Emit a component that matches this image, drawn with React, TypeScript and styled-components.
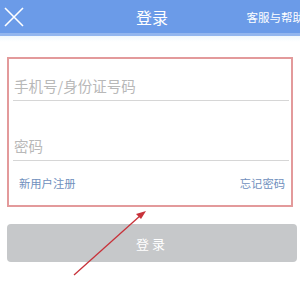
import styled, { createGlobalStyle } from 'styled-components';

const GlobalStyle = createGlobalStyle`
  html, body {
    margin: 0;
    padding: 0;
    background: #ffffff;
    font-family: "Noto Sans CJK SC", "Noto Sans", sans-serif;
  }
`;

const Page = styled.div`
  position: relative;
  width: 300px;
  height: 283px;
  overflow: hidden;
  background: #ffffff;
`;

const Header = styled.header`
  height: 33px;
  background: #6b9be8;
  border-bottom: 3px solid #93b6ee;
  display: grid;
  grid-template-columns: 1fr auto 1fr;
  align-items: center;
`;

const CloseButton = styled.div`
  width: 28px;
  height: 33px;
  display: flex;
  align-items: center;
  justify-content: center;
`;

const Title = styled.h1`
  margin: 0;
  color: #ffffff;
  font-size: 16px;
  font-weight: 400;
  padding-left: 4px;
`;

const HeaderLink = styled.span`
  justify-self: end;
  color: #ffffff;
  font-size: 11.5px;
  white-space: nowrap;
  margin-right: -4px;
`;

const Main = styled.main`
  padding: 21px 7px 0 7px;
  background: linear-gradient(#f1f8fc 0, #ffffff 6px);
`;

const FormBox = styled.div`
  border: 2px solid #e39a9b;
  padding: 0 2px 0 4px;
`;

const Field = styled.div<{ $height: number }>`
  height: ${p => p.$height}px;
  border-bottom: 1px solid #d6d6d6;
  display: flex;
  align-items: flex-end;
  padding-bottom: 4px;
  box-sizing: border-box;
`;

const Placeholder = styled.span`
  color: #b8b8b8;
  font-size: 14.5px;
  padding-left: 1px;
`;

const Links = styled.div`
  height: 44px;
  display: flex;
  align-items: center;
  justify-content: space-between;
  padding: 0 4px 0 6px;
`;

const TextLink = styled.span`
  color: #6f8fbd;
  font-size: 11.3px;
`;

const LoginButton = styled.div`
  margin: 17px -4px 0 0;
  height: 38px;
  border-radius: 4px;
  background: #c6c8ca;
  color: #ffffff;
  font-size: 13px;
  letter-spacing: 3px;
  display: flex;
  align-items: center;
  justify-content: center;
`;

const Arrow = styled.svg`
  position: absolute;
  left: 0;
  top: 0;
  pointer-events: none;
`;

export default function App() {
  return (
    <Page>
      <GlobalStyle />
      <Header>
        <CloseButton>
          <svg width="20" height="20" viewBox="0 0 20 20">
            <path d="M1 1 L19 19 M19 1 L1 19" stroke="#ffffff" strokeWidth="1.6" />
          </svg>
        </CloseButton>
        <Title>登录</Title>
        <HeaderLink>客服与帮助</HeaderLink>
      </Header>
      <Main>
        <FormBox>
          <Field $height={42}>
            <Placeholder>手机号/身份证号码</Placeholder>
          </Field>
          <Field $height={60}>
            <Placeholder>密码</Placeholder>
          </Field>
          <Links>
            <TextLink>新用户注册</TextLink>
            <TextLink>忘记密码</TextLink>
          </Links>
        </FormBox>
        <LoginButton>登录</LoginButton>
      </Main>
      <Arrow width="300" height="283" viewBox="0 0 300 283">
        <line x1="74" y1="275" x2="141" y2="215" stroke="#c8323a" strokeWidth="1.3" />
        <path d="M146 211 L136 214 L141 219 Z" fill="#c8323a" />
      </Arrow>
    </Page>
  );
}
